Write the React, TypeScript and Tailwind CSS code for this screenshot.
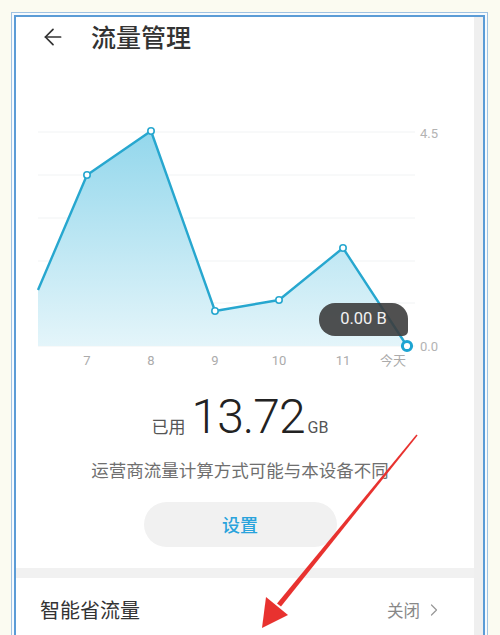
import { ArrowLeft, ChevronRight } from "lucide-react";

const points: [number, number][] = [
  [38, 290],
  [87, 175],
  [151, 131],
  [215, 311],
  [279, 300],
  [343, 248],
  [407, 346],
];

const gridLines = [132, 175, 218, 261, 303, 346];

const xLabels = [
  { x: 87, label: "7" },
  { x: 151, label: "8" },
  { x: 215, label: "9" },
  { x: 279, label: "10" },
  { x: 343, label: "11" },
  { x: 393, label: "今天" },
];

const UsageChart = () => {
  const line = points.map(([x, y]) => `${x},${y}`).join(" ");
  const area = `${line} 407,346 38,346`;

  return (
    <div className="relative h-[318px]">
      <svg width="458" height="318" viewBox="16 57 458 318" className="block">
        <defs>
          <linearGradient id="usageFill" gradientUnits="userSpaceOnUse" x1="0" y1="131" x2="0" y2="346">
            <stop offset="0" stopColor="#93d7ec" />
            <stop offset="1" stopColor="#e4f5fa" />
          </linearGradient>
        </defs>
        {gridLines.map((y) => (
          <line key={y} x1="38" x2="415" y1={y} y2={y} stroke="#f1f3f4" strokeWidth="1" />
        ))}
        <polygon points={area} fill="url(#usageFill)" />
        <polyline points={line} fill="none" stroke="#27a7cf" strokeWidth="2.4" strokeLinejoin="round" />
        {points.slice(1, 6).map(([x, y]) => (
          <circle key={x} cx={x} cy={y} r="3.2" fill="#ffffff" stroke="#27a7cf" strokeWidth="1.6" />
        ))}
        <text x="420" y="137.5" fontSize="13" fill="#b3b3b3" fontFamily="Roboto, sans-serif">4.5</text>
        <text x="420" y="351" fontSize="13" fill="#b3b3b3" fontFamily="Roboto, sans-serif">0.0</text>
        {xLabels.map((l) => (
          <text
            key={l.label}
            x={l.x}
            y="365"
            fontSize="13"
            textAnchor="middle"
            fill="#ababab"
            fontFamily="Roboto, 'Noto Sans CJK SC', sans-serif"
          >
            {l.label}
          </text>
        ))}
      </svg>
      {/* tooltip for today */}
      <div className="absolute left-[303px] top-[246px] flex h-[33px] w-[89px] items-center justify-center rounded-[16px] rounded-br-[5px] bg-[#3d3d3d]/90 font-['Roboto',sans-serif] text-[16.5px] text-[#f2f2f2]">
        0.00 B
      </div>
      <svg width="458" height="318" viewBox="16 57 458 318" className="pointer-events-none absolute left-0 top-0">
        <circle cx="407" cy="346" r="4.6" fill="#ffffff" stroke="#1da4d2" strokeWidth="3" />
      </svg>
    </div>
  );
};

export default function App() {
  return (
    <div className="relative h-[635px] w-[500px] overflow-hidden bg-[#fbfbf1] pl-[11px] pr-[12px] pt-[12px] font-['Noto_Sans_CJK_SC',sans-serif]">
      <div className="h-full border border-b-0 border-[#9fc2e2] bg-[#f7fbfe] p-[2px] pb-0">
        <div className="flex h-full border-2 border-b-0 border-[#5b9cd6]">
          <div className="flex-1 bg-white">
            {/* Header */}
            <div className="flex h-[40px] items-center pl-[24px]">
              <ArrowLeft className="h-[26px] w-[26px] text-[#333]" strokeWidth={1.6} />
              <span className="ml-[25px] text-[25px] font-medium text-[#333]">流量管理</span>
            </div>

            <UsageChart />

            <div className="flex flex-col items-center pr-[10px]">
              <div className="mt-[18px] flex items-baseline leading-none">
                <span className="text-[17px] text-[#555]">已用</span>
                <span className="ml-[6px] font-['Roboto',sans-serif] text-[48px] font-light tracking-[-1px] text-[#222]">
                  13.72
                </span>
                <span className="ml-[3px] font-['Roboto',sans-serif] text-[16px] text-[#555]">GB</span>
              </div>
              <div className="mt-[16px] text-[17.5px] leading-[26px] text-[#6f6f6f]">运营商流量计算方式可能与本设备不同</div>
              <button
                type="button"
                className="mt-[19px] flex h-[45px] w-[193px] items-center justify-center rounded-full bg-[#f1f1f1] text-[18px] font-medium text-[#2aa3dc]"
              >
                设置
              </button>
            </div>

            <div className="mt-[21px] h-[10px] bg-[#f1f1f1]" />

            <div className="flex h-[64px] items-center justify-between pl-[24px] pr-[30px]">
              <span className="text-[20px] text-[#333]">智能省流量</span>
              <span className="flex items-center text-[16.5px] text-[#888]">
                关闭
                <ChevronRight className="ml-[4px] h-[20px] w-[20px] text-[#999]" strokeWidth={1.5} />
              </span>
            </div>
          </div>
          <div className="w-[9px] bg-[#efefef]" />
        </div>
      </div>

      {/* red annotation arrow */}
      <svg width="500" height="635" viewBox="0 0 500 635" className="pointer-events-none absolute left-0 top-0">
        <polygon points="417.6,435.5 416.4,434.5 277,603.4 281,606.6" fill="#e8322f" />
        <polygon points="262,628 266,597 277,606 288,615" fill="#e8322f" />
      </svg>
    </div>
  );
}
